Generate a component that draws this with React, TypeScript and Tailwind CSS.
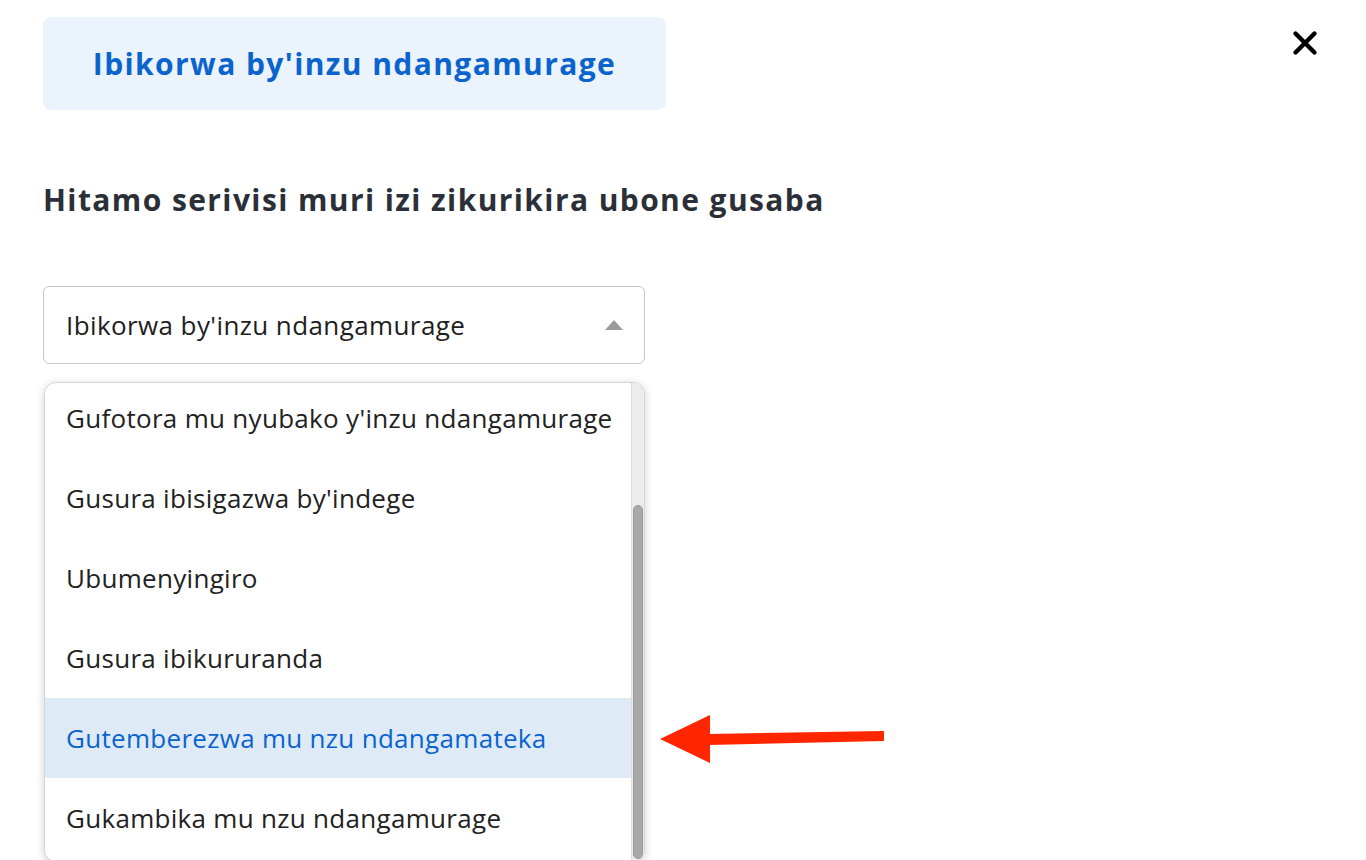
import { X } from 'lucide-react';

const items = [
  "Gufotora mu nyubako y'inzu ndangamurage",
  "Gusura ibisigazwa by'indege",
  'Ubumenyingiro',
  'Gusura ibikururanda',
  'Gutemberezwa mu nzu ndangamateka',
  'Gukambika mu nzu ndangamurage',
];

const ACTIVE = 4;

export default function App() {
  return (
    <div className="relative w-[1366px] h-[860px] overflow-hidden bg-white" style={{ fontFamily: '"Open Sans", Lato, sans-serif' }}>
      <button className="absolute right-[42px] top-[24px] text-black">
        <X className="w-[38px] h-[38px]" strokeWidth={2.8} />
      </button>

      <div className="pl-[43px] pt-[17px]">
        <div className="w-[623px] h-[93px] rounded-lg bg-[#ebf3fd] flex items-center justify-center">
          <span className="text-[30px] font-bold tracking-[1.4px] text-[#0b63ce]">Ibikorwa by'inzu ndangamurage</span>
        </div>

        <h2 className="mt-[68px] text-[30px] font-bold tracking-[1.4px] text-[#2b2f38] leading-[44px]">
          Hitamo serivisi muri izi zikurikira ubone gusaba
        </h2>

        <div className="mt-[64px] w-[602px] h-[78px] border border-[#c8c8c8] rounded-md flex items-center justify-between pl-[22px] pr-[20px]">
          <span className="text-[26px] tracking-[0.4px] text-[#1e1e1e]">Ibikorwa by'inzu ndangamurage</span>
          <svg width="20" height="12" viewBox="0 0 20 12">
            <polygon points="10,1 19,11 1,11" fill="#9a9a9a" />
          </svg>
        </div>

        <div className="relative mt-[18px] ml-px w-[601px] h-[480px] rounded-xl border border-[#d6d6d6] bg-white shadow-[0_2px_10px_rgba(0,0,0,0.18)] overflow-hidden">
          <ul className="-mt-[5px] pr-[13px]">
            {items.map((t, i) => (
              <li
                key={t}
                className={`h-[80px] flex items-center pl-[21px] text-[26px] tracking-[0.3px] whitespace-nowrap ${i === ACTIVE ? 'bg-[#deebf7] text-[#0b63ce]' : 'text-[#222]'}`}
              >
                {t}
              </li>
            ))}
          </ul>
          <div className="absolute right-0 top-0 bottom-0 w-[13px] bg-[#ececec] border-l border-[#dcdcdc]">
            <div className="absolute left-[1px] right-[1px] top-[122px] bottom-[2px] rounded-full bg-[#a9a9a9] border border-[#999]" />
          </div>
        </div>
      </div>

      <svg className="absolute left-[658px] top-[712px]" width="230" height="56" viewBox="0 0 230 56">
        <polygon points="2,27 52,3 52,51" fill="#ff2600" />
        <polygon points="50,22 226,19 226,29 50,33" fill="#ff2600" />
      </svg>
    </div>
  );
}
